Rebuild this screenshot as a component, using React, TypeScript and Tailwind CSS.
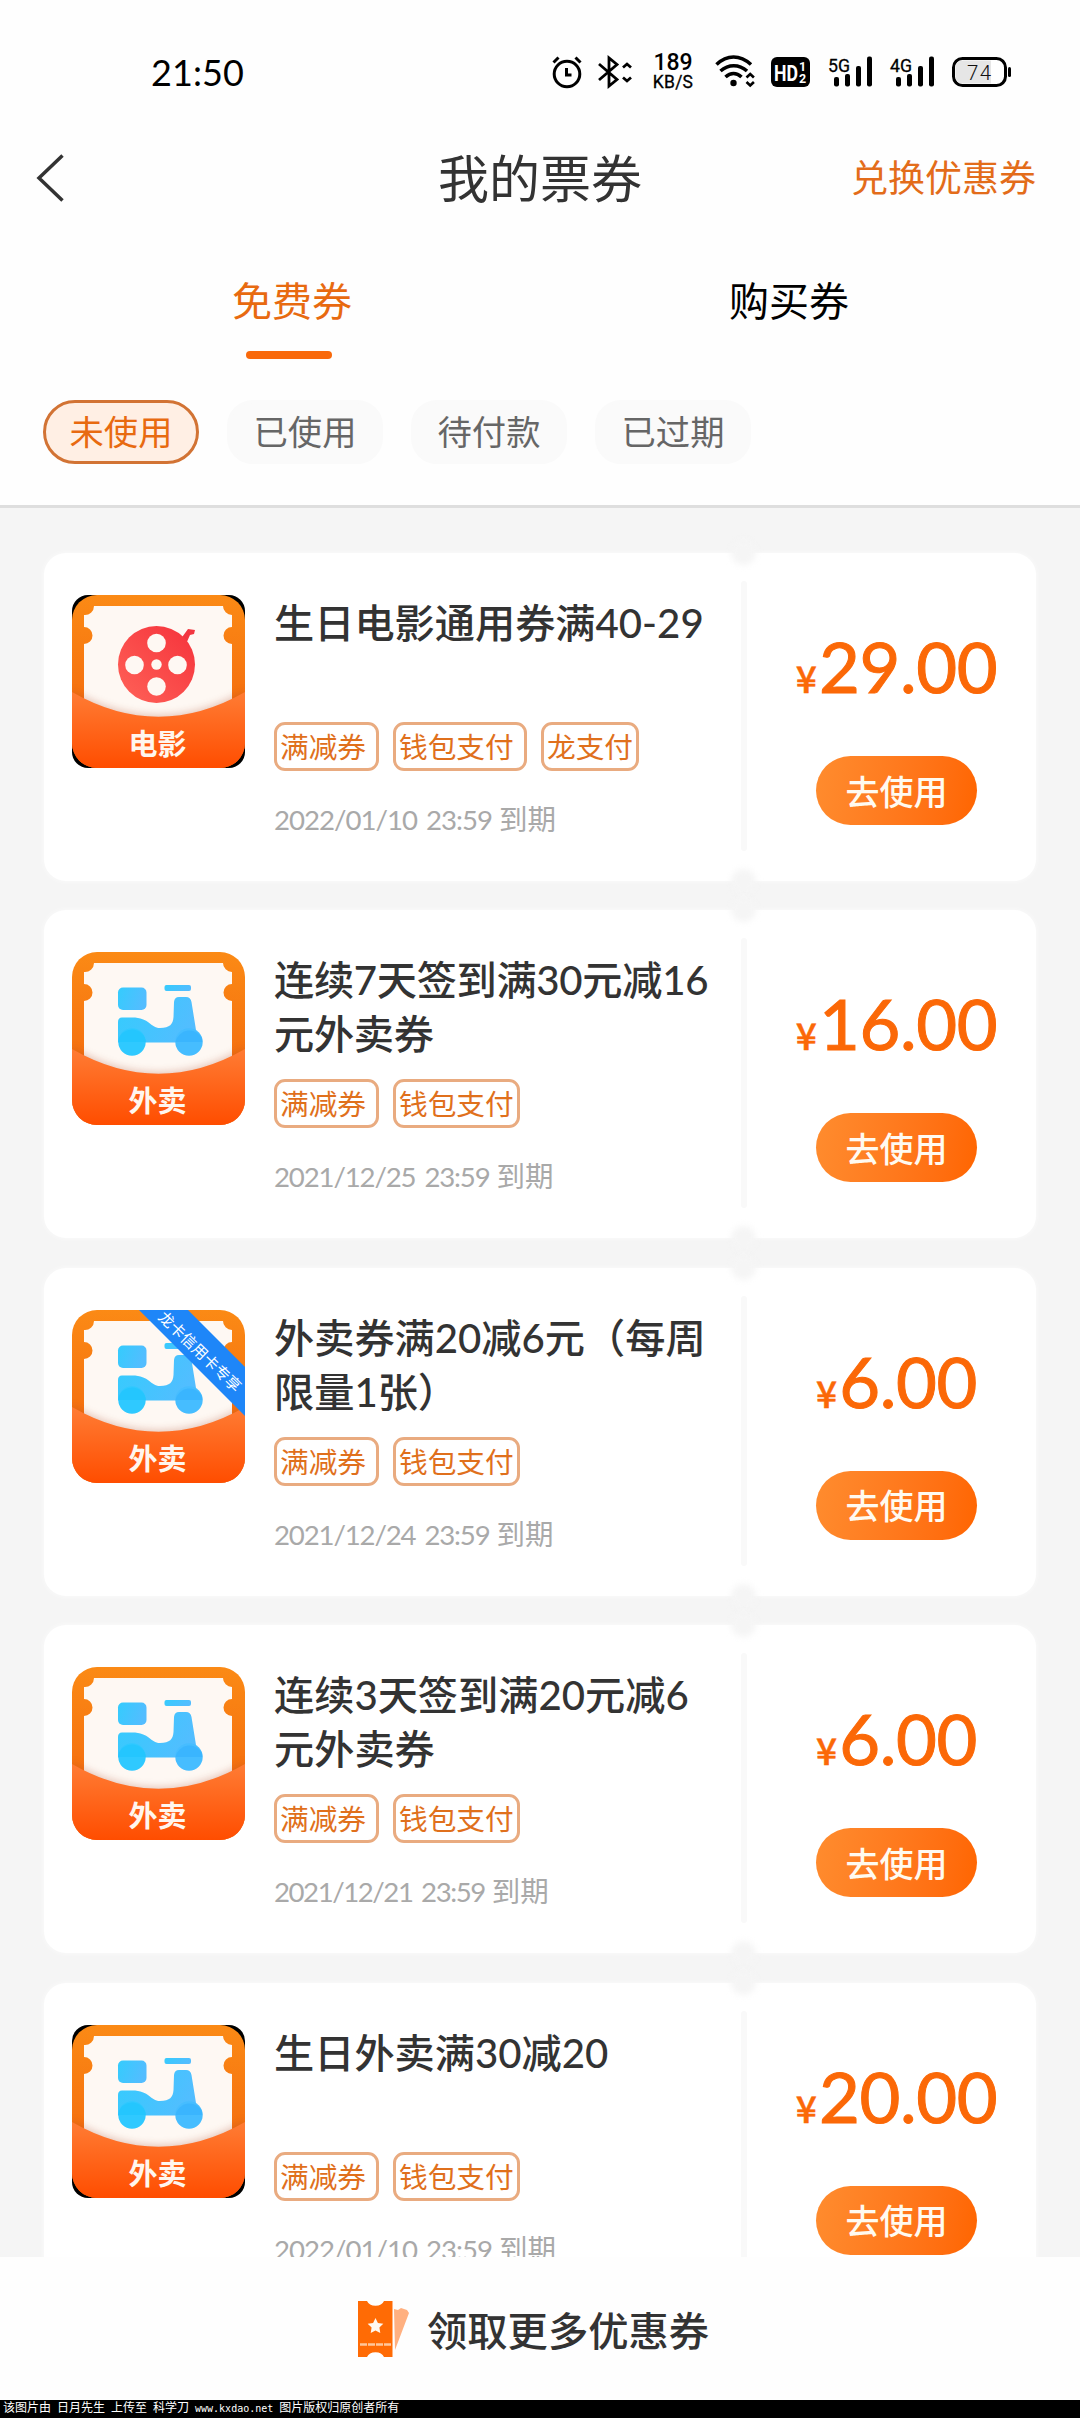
import type { ReactNode } from "react";

type Kind = "movie" | "food";

interface Coupon {
  kind: Kind;
  title: string[];
  titleClass?: string;
  tags: { label: string; width: string }[];
  date: string;
  dateClass: string;
  amount: string;
  darkCorners?: boolean;
  ribbon?: string;
}

const REDUCE = { label: "满减券", width: "w-[105px]" };
const WALLET = { label: "钱包支付", width: "w-[127px]" };

const coupons: Coupon[] = [
  {
    kind: "movie",
    title: ["生日电影通用券满40-29"],
    tags: [REDUCE, { label: "钱包支付", width: "w-[134px]" }, { label: "龙支付", width: "w-[98px]" }],
    date: "2022/01/10 23:59",
    dateClass: "tracking-[-1px]",
    amount: "29.00",
    darkCorners: true,
  },
  {
    kind: "food",
    title: ["连续7天签到满30元减16", "元外卖券"],
    titleClass: "tracking-[-0.300px]",
    tags: [REDUCE, WALLET],
    date: "2021/12/25 23:59",
    dateClass: "tracking-[-1.150px]",
    amount: "16.00",
  },
  {
    kind: "food",
    title: ["外卖券满20减6元（每周", "限量1张）"],
    tags: [REDUCE, WALLET],
    date: "2021/12/24 23:59",
    dateClass: "tracking-[-1.150px]",
    amount: "6.00",
    ribbon: "龙卡信用卡专享",
  },
  {
    kind: "food",
    title: ["连续3天签到满20元减6", "元外卖券"],
    tags: [REDUCE, WALLET],
    date: "2021/12/21 23:59",
    dateClass: "tracking-[-1.450px]",
    amount: "6.00",
  },
  {
    kind: "food",
    title: ["生日外卖满30减20"],
    tags: [REDUCE, WALLET],
    date: "2022/01/10 23:59",
    dateClass: "tracking-[-1px]",
    amount: "20.00",
    darkCorners: true,
  },
];

function Signal({ label }: { label: string }) {
  return (
    <svg width="46" height="32" viewBox="0 0 46 32" className="overflow-visible">
      <text x="0" y="15.500" fontSize="19" textLength="22" lengthAdjust="spacingAndGlyphs" stroke="#000" strokeWidth="0.300" className="font-['Roboto']">
        {label}
      </text>
      <rect x="6" y="21" width="5" height="9.500" rx="2" />
      <rect x="17" y="18" width="5" height="12.500" rx="2" />
      <rect x="28" y="10" width="5" height="20.500" rx="2" />
      <rect x="39" y="0.500" width="5" height="30" rx="2" />
    </svg>
  );
}

function StatusBar() {
  return (
    <div className="flex h-[144px] items-center pl-[151px] text-black">
      <div className="w-[400px] font-['Lato',sans-serif] text-[36px] leading-[40px] tracking-[0.1px]">21:50</div>
      <svg width="32" height="34" viewBox="0 0 32 34" fill="none" stroke="#000" strokeWidth="3">
        <circle cx="16" cy="19" r="12.800" />
        <path d="M2.500 7.500l5-5M29.500 7.500l-5-5M15.500 13v7h5" />
      </svg>
      <svg className="ml-[14px]" width="38" height="34" viewBox="0 0 38 34" fill="none" stroke="#000" strokeWidth="2.800">
        <path d="M2 9l18 15.500-8 6.500V3l8 6.500L2 25M26 12.500l4-3.500 4 3.500M26 22.500l4 3.500 4-3.500" />
      </svg>
      <div className="ml-[16px] flex w-[44px] flex-col items-center font-['Roboto']">
        <span className="text-[23px] font-medium leading-[20px]">189</span>
        <span className="text-[17.500px] leading-[19px] tracking-[0.200px] [-webkit-text-stroke:0.300px_#000]">KB/S</span>
      </div>
      <svg className="ml-[20px]" width="42" height="34" viewBox="0 0 42 34" fill="none" stroke="#000" strokeWidth="3.600">
        <path d="M1.500 9.500C12-.5 25-.5 36 9.500M5.500 16c8-7 18.500-7 26.500 0M10.500 22c5-4.500 11-4.500 16 0" />
        <circle cx="18.500" cy="28" r="3.200" fill="#000" stroke="none" />
        <path strokeWidth="2.600" d="M31.500 22.500l3.700-3.500 3.700 3.500M31.500 27l3.700 3.500L38.900 27" />
      </svg>
      <svg className="ml-[14px]" width="40" height="30" viewBox="0 0 40 30">
        <rect width="39" height="30" rx="6" />
        <text x="3" y="23.500" fontSize="22" fontWeight="700" fill="#fff" textLength="24" lengthAdjust="spacingAndGlyphs" className="font-['Roboto']">HD</text>
        <text x="28" y="13.500" fontSize="12.500" fontWeight="700" fill="#fff" className="font-['Roboto']">1</text>
        <text x="28" y="25.500" fontSize="12.500" fontWeight="700" fill="#fff" className="font-['Roboto']">2</text>
      </svg>
      <div className="ml-[17px] flex gap-[16px]">
        <Signal label="5G" />
        <Signal label="4G" />
      </div>
      <svg className="ml-[16px]" width="60" height="32" viewBox="0 0 60 32">
        <rect x="1.500" y="2.500" width="52" height="27" rx="9" fill="#fff" stroke="#000" strokeWidth="3" />
        <path d="M11 4.500h28v23H11c-5 0-7.500-3-7.500-7.500v-8c0-4.500 2.500-7.500 7.500-7.500z" fill="#e6e6e6" />
        <rect x="56" y="11" width="3" height="10" rx="1.500" />
        <text x="15" y="23.500" fontSize="20.500" fontWeight="300" fill="#111" textLength="24" className="font-['Roboto']">74</text>
      </svg>
    </div>
  );
}

function CouponArt({ kind, id, darkCorners, ribbon }: { kind: Kind; id: string; darkCorners?: boolean; ribbon?: string }) {
  return (
    <svg className="shrink-0" width="173" height="173" viewBox="0 0 173 173">
      <defs>
        <linearGradient id={`${id}-back`} x1="0" y1="0" x2="0" y2="1">
          <stop offset="0" stopColor="#fb8a15" />
          <stop offset="0.600" stopColor="#f5700f" />
        </linearGradient>
        <linearGradient id={`${id}-front`} x1="0" y1="0" x2="0" y2="1">
          <stop offset="0" stopColor="#ff7c34" />
          <stop offset="1" stopColor="#ff4d00" />
        </linearGradient>
        <linearGradient id={`${id}-blue`} x1="0" y1="0" x2="1" y2="0.300">
          <stop offset="0" stopColor="#34ccfd" />
          <stop offset="1" stopColor="#53bdff" />
        </linearGradient>
        <linearGradient id={`${id}-red`} x1="0" y1="1" x2="1" y2="0">
          <stop offset="0" stopColor="#ff6258" />
          <stop offset="1" stopColor="#f5323b" />
        </linearGradient>
        <clipPath id={`${id}-clip`}>
          <rect width="173" height="173" rx="25" />
        </clipPath>
        <filter id={`${id}-soft`} x="-20%" y="-50%" width="140%" height="200%">
          <feGaussianBlur stdDeviation="4" />
        </filter>
      </defs>
      {darkCorners && <rect width="173" height="173" rx="16" fill="#000" />}
      <g clipPath={`url(#${id}-clip)`}>
        <rect width="173" height="173" fill={`url(#${id}-back)`} />
        <path
          d="M22 11H151a9 9 0 0 0 9 9V32a8.500 8.500 0 0 0 0 17V130H12V49a8.500 8.500 0 0 0 0-17V20a9 9 0 0 0 10-9z"
          fill="#fef8f3"
        />
        <path d="M0 96Q86.500 146 173 96V173H0z" fill="#a8482a" opacity="0.350" filter={`url(#${id}-soft)`} />
        {kind === "movie" ? (
          <>
            <path d="M108 45l8-11 7 1-1 4-4 1-4 9z" fill="#f23640" />
            <circle cx="84.500" cy="69.500" r="38.500" fill={`url(#${id}-red)`} />
            <g fill="#fef8f3">
              <circle cx="84.500" cy="48" r="9.300" />
              <circle cx="62.500" cy="70" r="9.300" />
              <circle cx="105.500" cy="70" r="9.300" />
              <circle cx="84.500" cy="91.500" r="9.300" />
              <circle cx="84.500" cy="69.500" r="5.200" />
            </g>
          </>
        ) : (
          <g fill={`url(#${id}-blue)`}>
            <rect x="46" y="35.500" width="28.500" height="22.500" rx="5" />
            <rect x="92.500" y="33" width="26.500" height="6" rx="2" />
            <path d="M50 65.500H60C78 65.500 78 76 88 76C98 76 101 72 101.500 65L102 50Q102.500 45 107 45H114Q118.500 45 119.500 50L124 78L130 90L104 90.500H46V70Q46 65.500 50 65.500Z" />
            <circle cx="60" cy="90" r="13.700" fill="#2fc9ff" />
            <circle cx="117" cy="90" r="13.700" fill="#46bdff" />
            <path d="M46.500 88a14 14 0 0 1 27.500 2H46.500z" fill="#10c1fc" opacity="0.350" />
            <path d="M103.500 90a14 14 0 0 1 27-2v2z" fill="#179efb" opacity="0.250" />
          </g>
        )}
        <path d="M0 97Q86.500 146.500 173 97V173H0z" fill={`url(#${id}-front)`} />
        <text x="85.500" y="160" fontSize="29" fontWeight="700" fill="#fff6ee" textAnchor="middle" className="font-['Noto_Sans_CJK_SC']">
          {kind === "movie" ? "电影" : "外卖"}
        </text>
        {ribbon && (
          <>
            <path d="M65-2h49l59 59v49z" fill="#1e86f8" />
            <text transform="translate(127.500 42) rotate(44)" y="5" fontSize="15.400" fill="#fff" textAnchor="middle" className="font-['Noto_Sans_CJK_SC']">
              {ribbon}
            </text>
          </>
        )}
      </g>
    </svg>
  );
}

function Tag({ width, children }: { width: string; children: ReactNode }) {
  return (
    <div className={`${width} h-[49px] shrink-0 whitespace-nowrap rounded-[11px] border-[3px] border-[#e9ab80] pl-[3px] text-[28.700px] leading-[42px] text-[#e0701c]`}>
      {children}
    </div>
  );
}

function CouponCard({ coupon, id }: { coupon: Coupon; id: string }) {
  return (
    <div className="relative flex h-[328px] shrink-0 rounded-[22px] bg-white shadow-[0_0_5px_1px_rgba(255,255,255,0.5)]">
      <div className="flex w-[714px] pl-[28px] pt-[42px]">
        <CouponArt kind={coupon.kind} id={id} darkCorners={coupon.darkCorners} ribbon={coupon.ribbon} />
        <div className="ml-[29px] flex flex-col whitespace-nowrap">
          <div className={`mt-[1px] h-[108px] font-['Lato','Noto_Sans_CJK_SC',sans-serif] text-[40.200px] font-medium leading-[54px] text-[#333] ${coupon.titleClass ?? ""}`}>
            {coupon.title.map((line) => (
              <div key={line}>{line}</div>
            ))}
          </div>
          <div className="mt-[18px] flex gap-[14px]">
            {coupon.tags.map((tag) => (
              <Tag key={tag.label} width={tag.width}>
                {tag.label}
              </Tag>
            ))}
          </div>
          <div className="mt-[28px] flex items-baseline gap-[7px] font-['Lato','Noto_Sans_CJK_SC',sans-serif] text-[28.500px] leading-[40px] text-[#a9a9a9]">
            <span className={`text-[27.600px] [word-spacing:3px] ${coupon.dateClass}`}>{coupon.date}</span>
            <span>到期</span>
          </div>
        </div>
      </div>
      <div className="flex w-[277px] flex-col items-center">
        <div className="mt-[69px] flex h-[88px] items-baseline gap-[2px] font-['Lato',sans-serif] leading-[88px] text-[#fb6807]">
          <span className="font-['Noto_Sans_CJK_SC'] text-[37px] font-medium [-webkit-text-stroke:0.500px_#fb6807]">¥</span>
          <span className="text-[70.500px] tracking-[-0.400px] [-webkit-text-stroke:1px_#fb6807]">{coupon.amount}</span>
        </div>
        <button className="mt-[46px] h-[69px] w-[161px] rounded-full bg-linear-100 from-[#ff8c2e] to-[#ff6500] text-[34px] font-medium leading-[64px] text-[#fffaf0]">
          去使用
        </button>
      </div>
      <div className="absolute left-[697px] top-[28px] h-[270px] w-[6px] rounded-full bg-[#f9f9f9]" />
      <div className="absolute left-[687px] top-[-13px] size-[25px] rounded-full bg-[#f5f5f5] blur-[3px]" />
      <div className="absolute bottom-[-13px] left-[687px] size-[25px] rounded-full bg-[#f5f5f5] blur-[3px]" />
    </div>
  );
}

function TicketIcon() {
  return (
    <svg width="54" height="60" viewBox="0 0 54 60">
      <path d="M36 10l4 1 3-2 6 2 2 3-14 37z" fill="#ffb080" />
      <path d="M0 2h9a9 7 0 0 0 17 0h8.500v56H26a9 7 0 0 0-17 0H0z" fill="#ff6b05" />
      <path d="M17.500 19l2.400 4.900 5.400.8-3.900 3.800.9 5.400-4.800-2.500-4.800 2.500.9-5.400-3.900-3.800 5.400-.8z" fill="#fff8f0" />
      <path d="M2 45.500h31" stroke="#ffc79c" strokeWidth="2.500" strokeDasharray="7 1" />
    </svg>
  );
}

export default function App() {
  return (
    <div className="flex h-[2418px] w-[1080px] flex-col overflow-hidden bg-[#f5f5f5] font-['Noto_Sans_CJK_SC',sans-serif]">
      <header className="h-[508px] shrink-0 border-b-[3px] border-[#dedede] bg-[#fefefe]">
        <StatusBar />
        <div className="grid h-[70px] grid-cols-[330px_420px_1fr] items-center">
          <svg className="ml-[36px]" width="30" height="50" viewBox="0 0 30 50" fill="none" stroke="#333" strokeWidth="3.500">
            <path d="M26.500 1.500L3 24l23.500 22.500" />
          </svg>
          <h1 className="pb-[6px] text-center text-[51px] leading-[64px] text-[#333]">我的票券</h1>
          <div className="pb-[6px] pr-[44px] text-right text-[37px] leading-[64px] text-[#e36c1a]">兑换优惠券</div>
        </div>
        <div className="flex h-[145px] pt-[57px] text-[40px] leading-[56px]">
          <div className="ml-[192px] flex w-[200px] flex-col items-center text-[#e86a10]">
            免费券
            <div className="mr-[6px] mt-[24px] h-[8px] w-[86px] rounded-full bg-[#f9690b]" />
          </div>
          <div className="ml-[297px] w-[200px] text-center text-black">购买券</div>
        </div>
        <div className="ml-[43px] mt-[41px] flex gap-[28px] text-center text-[34.300px] leading-[55px] text-[#666]">
          <div className="h-[64px] w-[156px] rounded-full border-[3px] border-[#d27334] bg-[#ffefe4] text-[#e86a10]">未使用</div>
          <div className="h-[64px] w-[156px] rounded-[26px] border-[3px] border-[#fafafa] bg-[#fafafa]">已使用</div>
          <div className="h-[64px] w-[156px] rounded-[26px] border-[3px] border-[#fafafa] bg-[#fafafa]">待付款</div>
          <div className="h-[64px] w-[156px] rounded-[26px] border-[3px] border-[#fafafa] bg-[#fafafa]">已过期</div>
        </div>
      </header>
      <main className="flex h-[1749px] shrink-0 flex-col gap-[29.400px] overflow-hidden px-[44px] pt-[45px]">
        {coupons.map((coupon, i) => (
          <CouponCard key={i} coupon={coupon} id={`coupon-${i}`} />
        ))}
      </main>
      <div className="flex h-[143px] shrink-0 items-center bg-[#fefefe] pl-[358px]">
        <TicketIcon />
        <span className="ml-[15px] text-[40.300px] font-medium leading-[56px] text-[#333]">领取更多优惠券</span>
      </div>
      <footer className="h-[18px] shrink-0 whitespace-pre bg-black pl-[3px] font-['Liberation_Mono','Noto_Sans_CJK_SC',monospace] text-[12px] leading-[17px] text-white">
        <span className="[word-spacing:-1.200px]">该图片由 日月先生 上传至 科学刀 </span>
        <span className="font-['DejaVu_Sans_Mono'] text-[10px]">www.kxdao.net </span>图片版权归原创者所有
      </footer>
    </div>
  );
}
